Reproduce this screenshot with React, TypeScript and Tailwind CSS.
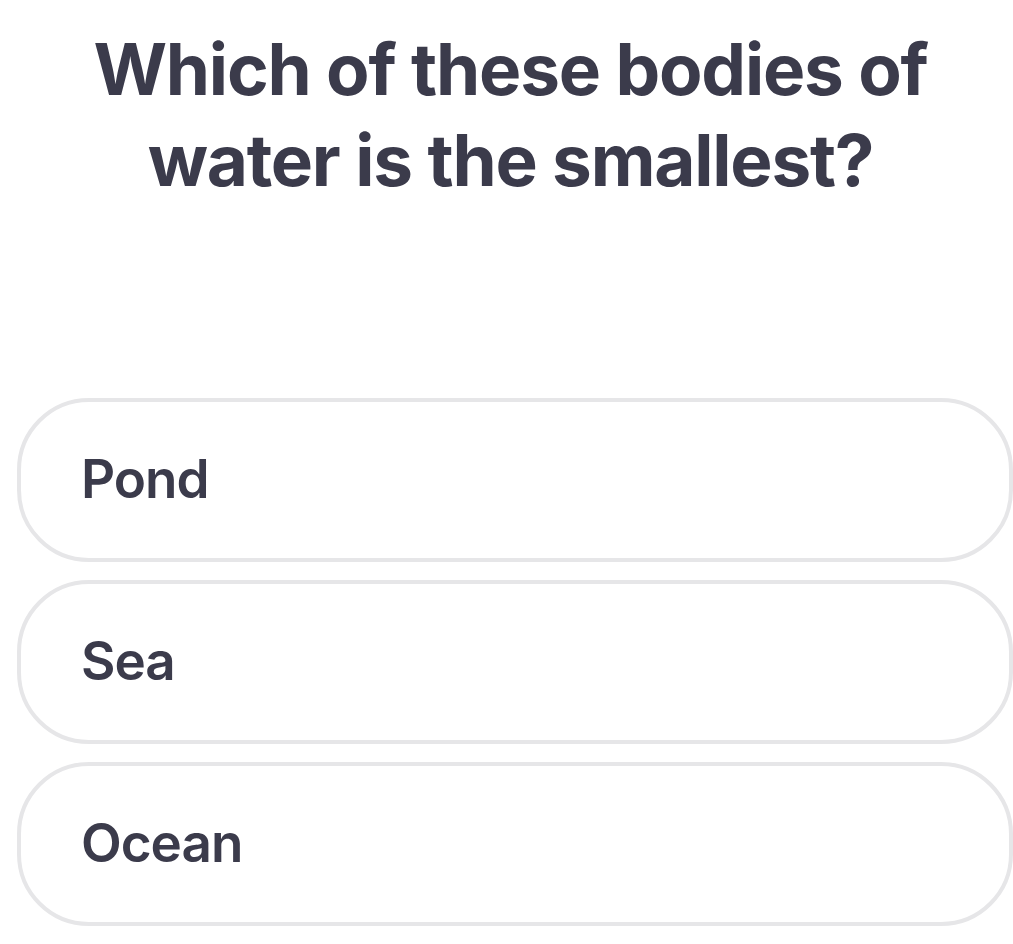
const options = ["Pond", "Sea", "Ocean"];

export default function App() {
  return (
    <div className="min-h-[944px] w-[1013px] bg-white font-['Inter','Liberation_Sans',sans-serif] text-[#3b3b4b]">
      <h1 className="pl-[8px] pt-[24px] text-center text-[71px] font-bold leading-[91px] tracking-[-1.2px]">
        Which of these bodies of
        <br />
        water is the smallest?
      </h1>
      <div className="mt-[192px] flex flex-col gap-[18px] pl-[17px]">
        {options.map((opt) => (
          <div
            key={opt}
            className="flex h-[164px] items-center rounded-[72px] border-[4px] border-[#e6e6e8] pl-[60px]"
          >
            <span className="text-[53px] font-semibold tracking-[-1px]">{opt}</span>
          </div>
        ))}
      </div>
    </div>
  );
}
